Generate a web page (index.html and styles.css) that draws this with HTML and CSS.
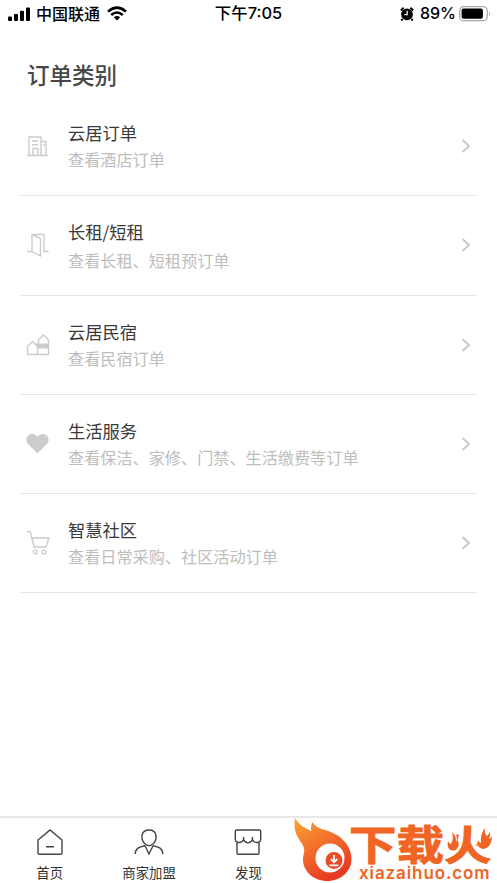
FILE: index.html
```html
<!DOCTYPE html>
<html lang="zh-CN">
<head>
<meta charset="utf-8">
<title>订单类别</title>
<link rel="stylesheet" href="styles.css">
</head>
<body>
<div class="app">
  <header class="status">
    <div class="status-left">
      <svg class="signal" width="23" height="14" viewBox="0 0 23 14"><rect x="0" y="9.5" width="4" height="4.5" rx="1"/><rect x="6" y="7" width="4" height="7" rx="1"/><rect x="12" y="3.8" width="4" height="10.2" rx="1"/><rect x="18" y="0.5" width="4" height="13.5" rx="1"/></svg>
      <span class="carrier">中国联通</span>
      <svg class="wifi" width="20" height="15" viewBox="0 0 20 15"><g fill="none" stroke="#000" stroke-width="2.6"><path d="M1 5.6Q10-2.4 19 5.6"/><path d="M4.2 9Q10 4 15.8 9"/></g><path d="M6.8 11.3Q10 8.8 13.2 11.3L10 14.5Z"/></svg>
    </div>
    <div class="time">下午7:05</div>
    <div class="status-right">
      <svg width="14" height="14" viewBox="0 0 14 14"><circle cx="7" cy="7.3" r="5.9"/><path d="M.8 3.5L3.6.8M13.2 3.5L10.4.8M2.6 12L1.3 13.5M11.4 12l1.3 1.5" stroke="#000" stroke-width="2"/><path d="M7.2 3.8v3.8H4.4" fill="none" stroke="#fff" stroke-width="1.2"/></svg>
      <span class="percent">89%</span>
      <svg class="battery" width="32" height="16" viewBox="0 0 32 16"><rect x=".7" y=".7" width="27.6" height="14" rx="4" fill="none" stroke="#aaa" stroke-width="1.3"/><rect x="2.6" y="2.6" width="21.3" height="10.2" rx="2"/><path d="M30 5.3q2.2 2.3 0 4.8z" fill="#aaa"/></svg>
    </div>
  </header>
  <h1>订单类别</h1>
  <main class="list">
    <section class="row">
      <svg class="icon" viewBox="0 0 24 24"><path d="M1 21.5h21M3 21.5V3h12v18.500M15 7.500h5v14M7 21.500V14.500h5v7M6 7h6M6 10.700h6M17 11h2"/></svg>
      <div class="copy"><h2>云居订单</h2><p>查看酒店订单</p></div>
      <svg class="chevron" viewBox="0 0 10 14"><path d="M1.500 1l6.500 6-6.500 6"/></svg>
    </section>
    <section class="row second">
      <svg class="icon" viewBox="0 0 24 24"><path d="M1 18.500h5V1.500h12v17h4.500M6 1.500l8.500 4v17.300L6 18.500"/></svg>
      <div class="copy"><h2>长租/短租</h2><p>查看长租、短租预订单</p></div>
      <svg class="chevron" viewBox="0 0 10 14"><path d="M1.500 1l6.500 6-6.500 6"/></svg>
    </section>
    <section class="row">
      <svg class="icon" viewBox="0 0 24 24"><path d="M1.500 21.500V13.500l5-5 5 5v8zM11.500 21.500h11V7L17.500 2l-5 5v5.500M11.500 14.800h11"/><path d="M9 10.500h13.500v3.500H11z" class="solid"/></svg>
      <div class="copy"><h2>云居民宿</h2><p>查看民宿订单</p></div>
      <svg class="chevron" viewBox="0 0 10 14"><path d="M1.500 1l6.500 6-6.500 6"/></svg>
    </section>
    <section class="row">
      <svg class="icon" viewBox="0 0 24 24"><path class="solid" d="M11.500 21.300L2 12C-1.200 8.500.5 2.600 5.700 2c2.600-.3 4.500 1 5.800 2.800 1.300-1.800 3.200-3.100 5.800-2.800 5.200.6 6.900 6.500 3.700 10z"/></svg>
      <div class="copy"><h2>生活服务</h2><p>查看保洁、家修、门禁、生活缴费等订单</p></div>
      <svg class="chevron" viewBox="0 0 10 14"><path d="M1.500 1l6.500 6-6.500 6"/></svg>
    </section>
    <section class="row">
      <svg class="icon" viewBox="0 0 24 24"><path d="M.5.500h3.700l4 15.500h11.800L22.900 7H6"/><circle cx="9.300" cy="21" r="1.900"/><circle cx="17.800" cy="21" r="1.900"/></svg>
      <div class="copy"><h2>智慧社区</h2><p>查看日常采购、社区活动订单</p></div>
      <svg class="chevron" viewBox="0 0 10 14"><path d="M1.500 1l6.500 6-6.500 6"/></svg>
    </section>
  </main>
  <nav class="tabs">
    <div class="tab"><svg viewBox="0 0 30 28"><path d="M3 12L15 2l12 10v13q0 1.200-1.200 1.200H4.200Q3 26.200 3 25zM11 18.800h8"/></svg><span>首页</span></div>
    <div class="tab"><svg viewBox="0 0 30 28"><path d="M15 2C6.500 2 6.500 11 10.500 15.500q4.500 4.500 9 0C23.500 11 23.500 2 15 2zM11 17.800C5 19 1.500 20 1.200 26M19 17.800c6 1.200 9.500 2.200 9.800 8.200M11 17.800l4 8.200 4-8.200"/></svg><span>商家加盟</span></div>
    <div class="tab"><svg viewBox="0 0 30 28"><path d="M3.500 2h23q1.200 0 1.200 1.200V11c0 4.200-6.200 5-8.300.5V9v2.500c-1.800 4.500-7 4.500-8.800 0V9v2.500C8.500 16 2.300 15.200 2.300 11V3.200Q2.300 2 3.500 2zM4 14.500V25q0 1.200 1.200 1.200h19.600q1.200 0 1.200-1.200V14.500"/></svg><span>发现</span></div>
    <div class="tab faint"><span>订单列表</span></div>
    <div class="tab faint"><span>我的</span></div>
  </nav>
  <aside class="brand">
    <svg class="flame" width="62" height="66" viewBox="0 0 62 66"><defs><linearGradient id="fire" x1="0" y1="0" x2=".5" y2="1"><stop stop-color="#f8a533"/><stop offset=".5" stop-color="#f2702c"/><stop offset="1" stop-color="#e83b23"/></linearGradient></defs><path fill="url(#fire)" d="M3 1C7 8 14 12 19.500 14 18.500 11 19 8 20.500 5 24 12 32 12 40 15.500 51 20 59 30 59.500 41 60 54 49 64 35.500 64 21 64 11 54 11 42.500c0-5 2-7 1-11C11 24 0 20 3 1z"/><circle cx="38" cy="41" r="14.500" fill="#fff"/><circle cx="42" cy="43.500" r="8.500" fill="#e94b25"/><path d="M42 38v7M38.700 42l3.300 3.300 3.300-3.300M37.500 48.300h9" fill="none" stroke="#fff" stroke-width="1.800"/></svg>
    <div class="wordmark"><strong>下载火</strong><small>xiazaihuo.com</small></div>
    <svg class="sparks" width="46" height="26" viewBox="0 0 46 26"><path class="gap" d="M0 4h10l2 17H0zM33 0h12v21l-14 2z"/><path d="M6 4q5 5 4 10 1-1 1-3 4 6-1 11-6 2-8-3-1-3 0-6 1 3 3 3 3-5 1-12zM39 0q-1 5 2 8 2-2 3-4 1 3-1 7 2-1 3-3 0 12-9 13-7-1-5-9 1 3 3 3-1-9 4-15z"/></svg>
  </aside>
</div>
</body>
</html>
```
FILE: styles.css
```css
* { box-sizing: border-box; }
body { margin: 0; background: #fff; font-family: "Noto Sans CJK SC", sans-serif; }
.app { position: relative; width: 497px; height: 883px; display: flex; flex-direction: column; overflow: hidden; }
h1, h2, p { margin: 0; font-weight: 400; }
.status { height: 27px; display: grid; grid-template-columns: 1fr auto 1fr; align-items: center; padding: 0 6px 0 8px; font-size: 16px; font-weight: 500; line-height: 27px; }
.status-left, .status-right { display: flex; align-items: center; }
.status-right { justify-content: flex-end; }
.carrier { margin: 0 7px 0 5px; }
.time { margin-right: 2px; }
.time, .percent { font-family: Inter, "Noto Sans CJK SC", sans-serif; }
.time { font-size: 16.400px; }
.percent { margin: 0 3px 0 6px; }
h1 { height: 70px; padding: 31px 0 0 27px; font-size: 22.5px; line-height: 32px; font-weight: 500; color: #484848; }
.list { padding: 0 20px; }
.row { height: 99.250px; display: flex; align-items: center; padding: 0 6px; border-bottom: 1.500px solid #e6e6e6; }
.icon { width: 24px; height: 24px; fill: none; stroke: #ccc; stroke-width: 1.400; }
.solid { fill: #ccc; stroke: none; }
.copy { flex: 1; padding-left: 18px; }
h2 { font-size: 17.300px; line-height: 27px; color: #3a3a3a; }
p { font-size: 16.150px; line-height: 27px; color: #bdbdbd; }
.second .copy { padding-top: 1px; }
.second p { padding-top: 2px; }
.chevron { width: 10px; height: 14px; fill: none; stroke: #c8c8c8; stroke-width: 1.900; }
.tabs { height: 67px; margin-top: auto; display: grid; grid-template-columns: repeat(5, 1fr); border-top: 2px solid #e8e8e8; }
.tab { display: flex; flex-direction: column; align-items: center; justify-content: flex-end; padding-bottom: 1px; font-size: 13.400px; line-height: 20px; color: #333; }
.tab svg { width: 30px; height: 28px; margin-bottom: 6px; fill: none; stroke: #444; stroke-width: 1.400; }
.faint { color: #f2f2f2; }
.brand { position: absolute; left: 292px; top: 817px; display: flex; color: #f06424; }
.wordmark { display: flex; flex-direction: column; margin-left: -5px; }
.wordmark strong { font-size: 47.500px; line-height: 46px; font-weight: 700; transform: translateY(3px) scaleY(.86); -webkit-text-stroke: 1px #f06424; }
.wordmark small { font-family: Inter, sans-serif; font-size: 17px; line-height: 20px; margin-left: 10px; font-weight: 600; letter-spacing: .900px; }
.sparks { position: absolute; left: 154px; top: 11px; fill: #f06424; }
.gap { fill: #fff; }
```
